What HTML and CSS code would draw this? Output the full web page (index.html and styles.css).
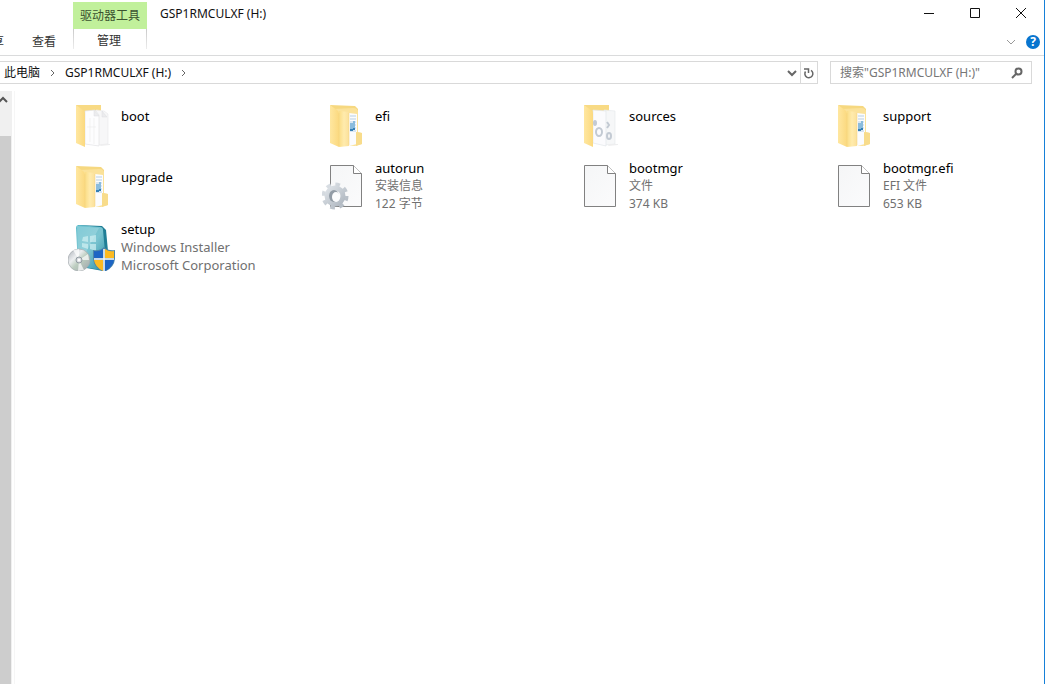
FILE: index.html
```html
<!DOCTYPE html>
<html lang="zh-CN">
<head>
<meta charset="utf-8">
<title>GSP1RMCULXF (H:)</title>
<link rel="stylesheet" href="styles.css">
</head>
<body>
<svg class="defs" aria-hidden="true">
  <defs>
    <linearGradient id="gold" x1="0" x2="1"><stop offset="0" stop-color="#fbdd85"/><stop offset=".5" stop-color="#ffebad"/><stop offset="1" stop-color="#fbe09a"/></linearGradient>
    <linearGradient id="cover" x1="0" x2="1"><stop offset="0" stop-color="#ffe7a0"/><stop offset="1" stop-color="#fbd97f"/></linearGradient>
    <linearGradient id="sheet" x1="0" y1="0" x2="1" y2="1"><stop offset="0" stop-color="#f5f6f7"/><stop offset="1" stop-color="#fbfbfc"/></linearGradient>
    <linearGradient id="metal" x1="0" y1="0" x2="1" y2="1"><stop offset="0" stop-color="#dde2e7"/><stop offset="1" stop-color="#b0b8c1"/></linearGradient>
    <linearGradient id="teal" x1="0" y1="0" x2="1" y2="1"><stop offset="0" stop-color="#5dbccb"/><stop offset=".5" stop-color="#7cc5d1"/><stop offset="1" stop-color="#258ca4"/></linearGradient>
    <linearGradient id="disc" x1="0" y1="0" x2="1" y2="1"><stop offset="0" stop-color="#a9aeb5"/><stop offset=".35" stop-color="#eceef0"/><stop offset=".55" stop-color="#bccdbf"/><stop offset="1" stop-color="#a0a5ac"/></linearGradient>
    <symbol id="folder-full" viewBox="0 0 48 48">
      <path fill="#f6d880" d="M8 4l25 1 3 3v7H12z"/>
      <path fill="#fbe29a" d="M12 8l19-1q5 0 5 4v20l4 1v11l-7 2-17-1z"/>
      <path fill="#fbfcfe" d="M27 12l8 1v30l-8 2z"/>
      <path stroke="#b9d0e3" d="M28 15h6m-6 3h6m-6 3h6m-6 3h6m-6 3h6m-6 3h6"/>
      <path fill="#8bbcdd" d="M28 22h3v7h-3zm3-2h2v9h-2z"/><path fill="#347fb6" d="M28 28h3v2h-3zm3-1h2v2h-2z"/>
      <path fill="#f8dc8b" d="M34 31l6 1v11l-6 2z"/>
      <path fill="url(#gold)" d="M17 10l10 1v34l-10 1z"/>
      <path fill="url(#cover)" d="M8 4l7 5q2 1 2 4v33l-9-4z"/>
      <path fill="none" stroke="#f0d17c" stroke-width=".5" d="M17 12v33M27 12v32"/>
    </symbol>
    <symbol id="folder-pages" viewBox="0 0 48 48">
      <path fill="#f8da84" d="M8 4h25v8H18v29H8z"/>
      <path fill="#f7f7f8" stroke="#eaeaec" stroke-width=".7" d="M28 9l8 1 4 3v30l-12 1z"/>
      <path fill="#fdfdfe" stroke="#e2e3e5" stroke-width=".7" d="M17 10l10-1 4 5v31l-14-2z"/>
      <path fill="#ececee" stroke="#dddee0" stroke-width=".5" d="M26 9v6h5l-5-6m8 1v6h5z"/>
      <path fill="none" stroke="#ededee" stroke-width=".7" d="M22 17v24m4-24v26m-7-17h9"/>
      <path fill="url(#cover)" d="M8 4l7 5q2 1 2 4v33l-9-4z"/>
      <path fill="#eeeeef" d="M33 43h9v1l-10 1z"/>
    </symbol>
    <symbol id="folder-gears" viewBox="0 0 48 48">
      <path fill="#f8da84" d="M8 4h25v8H18v29H8z"/>
      <path fill="#f6f7f8" stroke="#e7e9ec" stroke-width=".7" d="M28 9l11 1v33l-11 1z"/>
      <path fill="#fbfbfd" stroke="#e3e6ea" stroke-width=".7" d="M17 9l13 1v35l-13-3z"/>
      <g fill="none" stroke="#c3cad3" stroke-width="2"><ellipse cx="23" cy="31" rx="3" ry="4"/><ellipse cx="19" cy="22" rx="1" ry="2"/><ellipse cx="33" cy="35" rx="2" ry="3"/><path d="M31 21l2 3-2 3"/></g>
      <path fill="url(#cover)" d="M8 4l7 5q2 1 2 4v33l-9-4z"/>
      <path fill="#eeeeef" d="M33 43h9v1l-10 1z"/>
    </symbol>
    <symbol id="file" viewBox="0 0 48 48">
      <path fill="url(#sheet)" stroke="#818181" d="M8.500 3.500h23l8 8v33h-31z"/>
      <path fill="#fff" stroke="#818181" d="M31.500 3.500v8h8"/>
    </symbol>
    <symbol id="gear-file" viewBox="0 0 48 48">
      <use href="#file"/>
      <g fill="none" stroke="url(#metal)">
        <circle cx="13" cy="34" r="11" stroke-width="5" stroke-dasharray="4.320"/>
        <circle cx="13" cy="34" r="8" stroke-width="5"/>
      </g>
      <ellipse cx="12" cy="34" rx="5" ry="6" fill="#929ca6"/>
      <ellipse cx="14" cy="35" rx="4" ry="5" fill="#fbfcfd"/>
    </symbol>
    <symbol id="installer" viewBox="0 0 48 48">
      <path fill="#207e96" d="M10 2l24 1 4 4 3 32-6 9-22-4z"/>
      <path fill="url(#teal)" d="M8 5q0-3 3-3l21 2q3 0 3 3l3 33-5 7-23-4z"/>
      <path fill="#b6e2e9" opacity=".4" d="M9 3l22 2-16 30-5 1z"/>
      <path fill="#d6f3f5" opacity=".65" d="M15 14l5-1v6l-6-1zm7-1l6-1v7h-6zm-8 7l6 1v5l-6-2zm8 1h6v7l-6-2z"/>
      <circle cx="11" cy="37" r="11" fill="url(#disc)" stroke="#a5aaaf" stroke-width=".7"/>
      <path fill="#fff" opacity=".7" d="M11 37L5 27l6-1zm0 0l9-6 1 6zm0 0l5 10-6 1z"/>
      <circle cx="11" cy="37" r="3" fill="#d6d9dc" stroke="#929ba3"/><circle cx="11" cy="37" r="1.500" fill="#fff"/>
      <path fill="#4c86a8" d="M36 24q4 4 11 3v9q-1 9-11 13-10-4-11-13v-9q7 1 11-3z"/>
      <path fill="#1d65c4" d="M35 26v9h-9v-7q5 1 9-2zm2 11h9q-1 7-9 11z"/>
      <path fill="#fcba21" d="M37 26q4 3 9 2v7h-9zM26 37h9v11q-8-4-9-11z"/>
      <path stroke="#f3f8fb" stroke-width="1.500" d="M36 26v22M26 36h20"/>
    </symbol>
  </defs>
</svg>
<div class="window">
  <header class="ribbon">
    <nav class="tabs">
      <button class="tab" type="button">共享</button>
      <button class="tab" type="button">查看</button>
    </nav>
    <div class="context">
      <span class="context-title">驱动器工具</span>
      <button class="tab context-tab" type="button">管理</button>
    </div>
    <h1 class="title">GSP1RMCULXF (H:)</h1>
    <div class="controls">
      <div class="caption">
        <button class="icon-button" type="button" aria-label="最小化"><svg width="12" height="12"><path d="M1 6.500h10"/></svg></button>
        <button class="icon-button" type="button" aria-label="最大化"><svg width="12" height="12"><path d="M1.500 1.500h9v9h-9z"/></svg></button>
        <button class="icon-button" type="button" aria-label="关闭"><svg width="12" height="12"><path d="M1 1l10 10M11 1L1 11"/></svg></button>
      </div>
      <div class="help-row">
        <button class="icon-button expand" type="button" aria-label="展开功能区"><svg width="10" height="10"><path d="M1 3l4 4 4-4"/></svg></button>
        <button class="help" type="button" aria-label="帮助">?</button>
      </div>
    </div>
  </header>
  <div class="navigation">
    <div class="address">
      <button class="crumb" type="button">此电脑</button>
      <svg class="chevron" width="6" height="10"><path d="M1 2l3 3-3 3"/></svg>
      <button class="crumb" type="button">GSP1RMCULXF (H:)</button>
      <svg class="chevron" width="6" height="10"><path d="M1 2l3 3-3 3"/></svg>
      <button class="icon-button history" type="button" aria-label="以前的位置"><svg width="10" height="10"><path d="M1 3l4 4 4-4"/></svg></button>
      <button class="icon-button refresh" type="button" aria-label="刷新"><svg width="12" height="12"><path d="M1 2h4.500v4M8 3.300a4 4 0 1 1-5.500 1.200"/></svg></button>
    </div>
    <form class="search">
      <input class="search-input" type="search" aria-label="搜索" placeholder='搜索"GSP1RMCULXF (H:)"'>
      <button class="icon-button search-button" type="button" aria-label="搜索"><svg width="12" height="12"><circle cx="7.500" cy="4.500" r="3"/><path d="M5 7l-4 4"/></svg></button>
    </form>
  </div>
  <div class="content">
    <div class="scrollbar">
      <button class="scroll-up" type="button" aria-label="向上滚动"><svg width="8" height="8"><path d="M-1 6l4-4 4 4"/></svg></button>
      <div class="thumb"></div>
    </div>
    <main class="files">
      <article class="tile"><svg class="file-icon"><use href="#folder-pages"/></svg><div class="info"><h2 class="name">boot</h2></div></article>
      <article class="tile"><svg class="file-icon"><use href="#folder-full"/></svg><div class="info"><h2 class="name">efi</h2></div></article>
      <article class="tile"><svg class="file-icon"><use href="#folder-gears"/></svg><div class="info"><h2 class="name">sources</h2></div></article>
      <article class="tile"><svg class="file-icon"><use href="#folder-full"/></svg><div class="info"><h2 class="name">support</h2></div></article>
      <article class="tile"><svg class="file-icon"><use href="#folder-full"/></svg><div class="info"><h2 class="name">upgrade</h2></div></article>
      <article class="tile"><svg class="file-icon"><use href="#gear-file"/></svg><div class="info"><h2 class="name">autorun</h2><p class="detail">安装信息</p><p class="detail">122 字节</p></div></article>
      <article class="tile"><svg class="file-icon"><use href="#file"/></svg><div class="info"><h2 class="name">bootmgr</h2><p class="detail">文件</p><p class="detail">374 KB</p></div></article>
      <article class="tile"><svg class="file-icon"><use href="#file"/></svg><div class="info"><h2 class="name">bootmgr.efi</h2><p class="detail">EFI 文件</p><p class="detail">653 KB</p></div></article>
      <article class="tile"><svg class="file-icon"><use href="#installer"/></svg><div class="info"><h2 class="name">setup</h2><p class="detail wide">Windows Installer</p><p class="detail wide">Microsoft Corporation</p></div></article>
    </main>
  </div>
</div>
</body>
</html>
```
FILE: styles.css
```css
* { box-sizing: border-box; }
body, h1, h2, p { margin: 0; }
body {
  background: #fff;
  color: #111;
  font: 12px/18px "Noto Sans", "Noto Sans CJK SC", sans-serif;
}
button, input {
  font: inherit;
  color: inherit;
  padding: 0;
  border: 0;
  background: transparent;
}
.defs { position: absolute; width: 0; height: 0; }
.window {
  display: flex;
  flex-direction: column;
  min-height: 100vh;
  overflow: hidden;
  border-right: 1px solid #1680d8;
}
.ribbon {
  display: flex;
  height: 56px;
  border-bottom: 1px solid #dadbdc;
}
.tabs {
  display: flex;
  align-items: flex-end;
  gap: 28px;
  margin-left: -20px;
  padding: 0 17px 3px 0;
}
.tab { height: 20px; color: #333; white-space: nowrap; }
.context { width: 74px; padding-top: 2px; text-align: center; }
.context-title {
  display: block;
  height: 27px;
  line-height: 27px;
  background: #c1f09b;
  color: #3a5230;
}
.context-tab {
  width: 100%;
  line-height: 24px;
  padding-right: 2px;
  border: solid;
  border-width: 0 1px;
  border-image: linear-gradient(#c8c8c8, #eee) 1;
}
.title { flex: 1; padding: 5px 13px; font-size: 12px; font-weight: 400; }
.caption { display: flex; height: 26px; }
.icon-button { display: grid; place-items: center; }
.icon-button svg, .scroll-up svg, .chevron { fill: none; stroke: #666; }
.caption .icon-button { width: 46px; }
.caption svg { stroke: #111; }
.help-row { display: flex; justify-content: flex-end; gap: 10px; padding: 9px 4px 0 0; }
.expand svg { stroke: #999; stroke-width: 1px; }
.help {
  width: 14px;
  height: 14px;
  border-radius: 50%;
  background: #0875cf;
  color: #fff;
  font-weight: 700;
  line-height: 14px;
}
.navigation { display: flex; gap: 12px; padding: 5px 12px 7px 0; }
.address {
  display: flex;
  flex: 1;
  align-items: center;
  height: 23px;
  padding-left: 4px;
  border: 1px solid #d9d9d9;
  border-left: 0;
}
.crumb { white-space: nowrap; }
.chevron { margin: 0 9px 0 10px; stroke-width: 1px; }
.history { width: 16px; margin-left: auto; }
.history svg, .refresh svg { stroke-width: 2px; }
.refresh svg { stroke-width: 1.5px; }
.refresh { width: 17px; height: 100%; border-left: 1px solid #d9d9d9; }
.search {
  display: flex;
  width: 202px;
  height: 23px;
  padding: 0 8px 0 9px;
  border: 1px solid #d9d9d9;
}
.search-input { flex: 1; min-width: 0; outline: 0; }
.search-input::placeholder { color: #767676; opacity: 1; }
.search-button svg { stroke-width: 2px; }
.content { display: flex; flex: 1; }
.scrollbar {
  display: flex;
  flex-direction: column;
  width: 12px;
  background: #f0f0f0;
}
.scroll-up { height: 45px; padding-top: 5px; display: flex; }
.scroll-up svg { stroke: #555; stroke-width: 2px; }
.thumb { flex: 1; margin-right: 1px; background: #cdcdcd; }
.files {
  display: grid;
  flex: 1;
  grid-template-columns: repeat(auto-fill, 208px);
  align-content: start;
  gap: 7px 46px;
  margin-left: 2px;
  padding: 7px 0 0 53px;
  border-left: 1px solid #f6f6f6;
}
.tile { display: flex; align-items: center; gap: 5px; height: 54px; }
.file-icon { width: 48px; height: 48px; flex: none; overflow: visible; }
.info { min-height: 36px; }
.name { font-size: 13px; font-weight: 400; line-height: 18px; color: #000; }
.detail { color: #707070; }
.wide { font-size: 13px; }
```
